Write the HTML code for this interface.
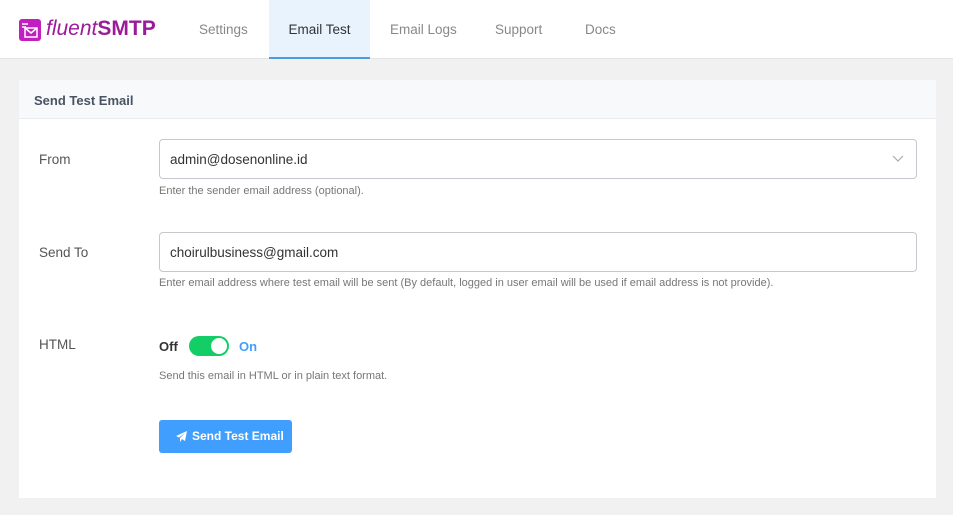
<!DOCTYPE html>
<html><head><style>
*{box-sizing:border-box;margin:0;padding:0}
body{width:953px;height:515px;background:#f1f1f1;font-family:"Liberation Sans",sans-serif;position:relative;overflow:hidden}
.top{position:absolute;left:0;top:0;width:953px;height:59px;background:#fff;border-bottom:1px solid #e3e3e3}
.logo{position:absolute;left:19px;top:19px;width:22px;height:22px;background:#c21ec0;border-radius:3px}
.logotext{position:absolute;left:46px;top:17px;font-size:21px;color:#9b1b9a}
.logotext i{font-weight:normal}
.logotext b{font-weight:bold;font-style:normal}
.tab{position:absolute;top:0;height:59px;line-height:59px;font-size:13.5px;color:#888}
.tab.act{background:#e8f3fd;color:#333;border-bottom:2px solid #4a9ee0}
.card{position:absolute;left:19px;top:80px;width:917px;height:418px;background:#fff}
.hd{height:39px;background:#f7f9fb;border-bottom:1px solid #e8ebef;padding:13px 0 0 15px;font-size:13px;font-weight:bold;color:#4a5363}
.lbl{position:absolute;left:20px;font-size:13.5px;color:#555}
.in{position:absolute;left:140px;width:758px;height:40px;border:1px solid #c5c9ce;border-radius:4px;padding:12px 10px;font-size:13.5px;color:#333}
.help{position:absolute;left:140px;font-size:11px;color:#777}
</style></head><body>
<div class="top">
<div class="logo"><svg width="22" height="22" viewBox="0 0 22 22"><rect x="6" y="9" width="12" height="9" fill="none" stroke="#fff" stroke-width="1.5"/><path d="M6 9l6 5 6-5" fill="none" stroke="#fff" stroke-width="1.5"/><path d="M3 5h6M3 8h4" stroke="#fff" stroke-width="1.5"/></svg></div>
<div class="logotext"><i>fluent</i><b>SMTP</b></div>
<div class="tab" style="left:199px">Settings</div>
<div class="tab act" style="left:269px;width:101px;text-align:center">Email Test</div>
<div class="tab" style="left:390px">Email Logs</div>
<div class="tab" style="left:495px">Support</div>
<div class="tab" style="left:585px">Docs</div>
</div>
<div class="card">
<div class="hd">Send Test Email</div>
<div class="lbl" style="top:72px">From</div>
<div class="in" style="top:59px">admin@dosenonline.id<svg style="position:absolute;right:12px;top:15px" width="12" height="8" viewBox="0 0 12 8"><path d="M1 1l5 5 5-5" fill="none" stroke="#aaa" stroke-width="1.2"/></svg></div>
<div class="help" style="top:105px">Enter the sender email address (optional).</div>
<div class="lbl" style="top:165px">Send To</div>
<div class="in" style="top:152px">choirulbusiness@gmail.com</div>
<div class="help" style="top:197px">Enter email address where test email will be sent (By default, logged in user email will be used if email address is not provide).</div>
<div class="lbl" style="top:257px">HTML</div>
<div style="position:absolute;left:140px;top:259px;font-size:13px;font-weight:bold;color:#333">Off</div>
<div style="position:absolute;left:170px;top:256px;width:40px;height:20px;border-radius:10px;background:#13ce66"><div style="position:absolute;right:2px;top:2px;width:16px;height:16px;border-radius:50%;background:#fff"></div></div>
<div style="position:absolute;left:220px;top:259px;font-size:13px;font-weight:bold;color:#409eff">On</div>
<div class="help" style="top:290px">Send this email in HTML or in plain text format.</div>
<div style="position:absolute;left:140px;top:340px;width:133px;height:33px;background:#409eff;border-radius:3px;color:#fff;font-size:12px;font-weight:bold;line-height:33px;padding-left:33px"><svg style="position:absolute;left:17px;top:11px" width="11" height="11" viewBox="0 0 11 11"><path d="M11 0L0 5l3 1.5L9 2 4 7v4l2-3 3 2z" fill="#fff"/></svg>Send Test Email</div>
</div>
</body></html>
